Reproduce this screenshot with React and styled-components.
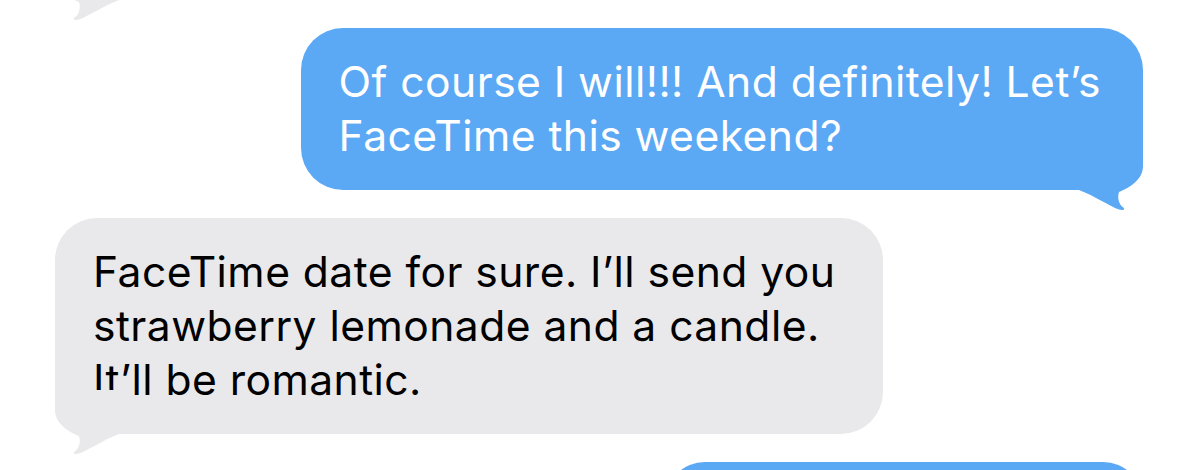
import React from 'react';
import styled, { createGlobalStyle } from 'styled-components';

const GlobalStyle = createGlobalStyle`
	html, body {
		margin: 0;
		padding: 0;
		background: #ffffff;
		overflow: hidden;
	}
	body {
		font-family: Inter, 'Liberation Sans', Arial, sans-serif;
		-webkit-font-smoothing: antialiased;
	}
`;

const BLUE = '#5ba8f5';
const GRAY = '#e9e9eb';

const Thread = styled.div`
	width: 1200px;
	height: 470px;
	overflow: hidden;
	display: flex;
	flex-direction: column;
	gap: 28px;
	padding: 0 57px 0 55px;
	box-sizing: border-box;
`;

const Row = styled.div`
	display: flex;
	justify-content: ${(p) => (p.$mine ? 'flex-end' : 'flex-start')};
	flex-shrink: 0;
`;

const Bubble = styled.div`
	position: relative;
	background: ${(p) => (p.$mine ? BLUE : GRAY)};
	color: ${(p) => (p.$mine ? '#ffffff' : '#000000')};
	border-radius: 42px;
	padding: 27px ${(p) => (p.$mine ? '42px' : '48px')} 27px 38px;
	font-size: 42.6px;
	line-height: 54px;
	letter-spacing: 0.45px;
	font-variant-ligatures: none;
	font-feature-settings: 'calt' 0, 'liga' 0;
	white-space: nowrap;
	box-sizing: border-box;
	min-height: ${(p) => p.$minHeight || 'auto'};
	width: ${(p) => p.$width || 'auto'};
	margin-top: ${(p) => p.$offset || '0'};
`;

const Line = styled.span`
	display: block;
`;

const TailSvg = styled.svg`
	position: absolute;
	bottom: -20px;
	width: 66px;
	height: 64px;
	${(p) => (p.$mine ? 'right: 0;' : 'left: 0; transform: scaleX(-1);')}
`;

const Tail = ({ mine }) => (
	<TailSvg $mine={mine} viewBox="0 0 66 64" aria-hidden="true">
		<path
			d="M66 0 L66 20 C66 34 52 42 42 46 C40 52 42 59 47 62 C48 64 45 64.5 42 63.5 C32 60 18 50 2 44 L0 44 L0 0 Z"
			fill={mine ? BLUE : GRAY}
		/>
	</TailSvg>
);

const messages = [
	{
		mine: true,
		lines: ['Of course I will!!! And definitely! Let’s', 'FaceTime this weekend?'],
	},
	{
		mine: false,
		lines: [
			'FaceTime date for sure. I’ll send you',
			'strawberry lemonade and a candle.',
			'It’ll be romantic.',
		],
	},
];

export default function App() {
	return (
		<>
			<GlobalStyle />
			<Thread>
				<Row>
					<Bubble $minHeight="80px" $width="420px" $offset="-81px">
						<Tail mine={false} />
					</Bubble>
				</Row>
				{messages.map((m, i) => (
					<Row key={i} $mine={m.mine}>
						<Bubble $mine={m.mine}>
							{m.lines.map((l, j) => (
								<Line key={j}>{l}</Line>
							))}
							<Tail mine={m.mine} />
						</Bubble>
					</Row>
				))}
				<Row $mine>
					<Bubble $mine $width="478px" $minHeight="80px" />
				</Row>
			</Thread>
		</>
	);
}
